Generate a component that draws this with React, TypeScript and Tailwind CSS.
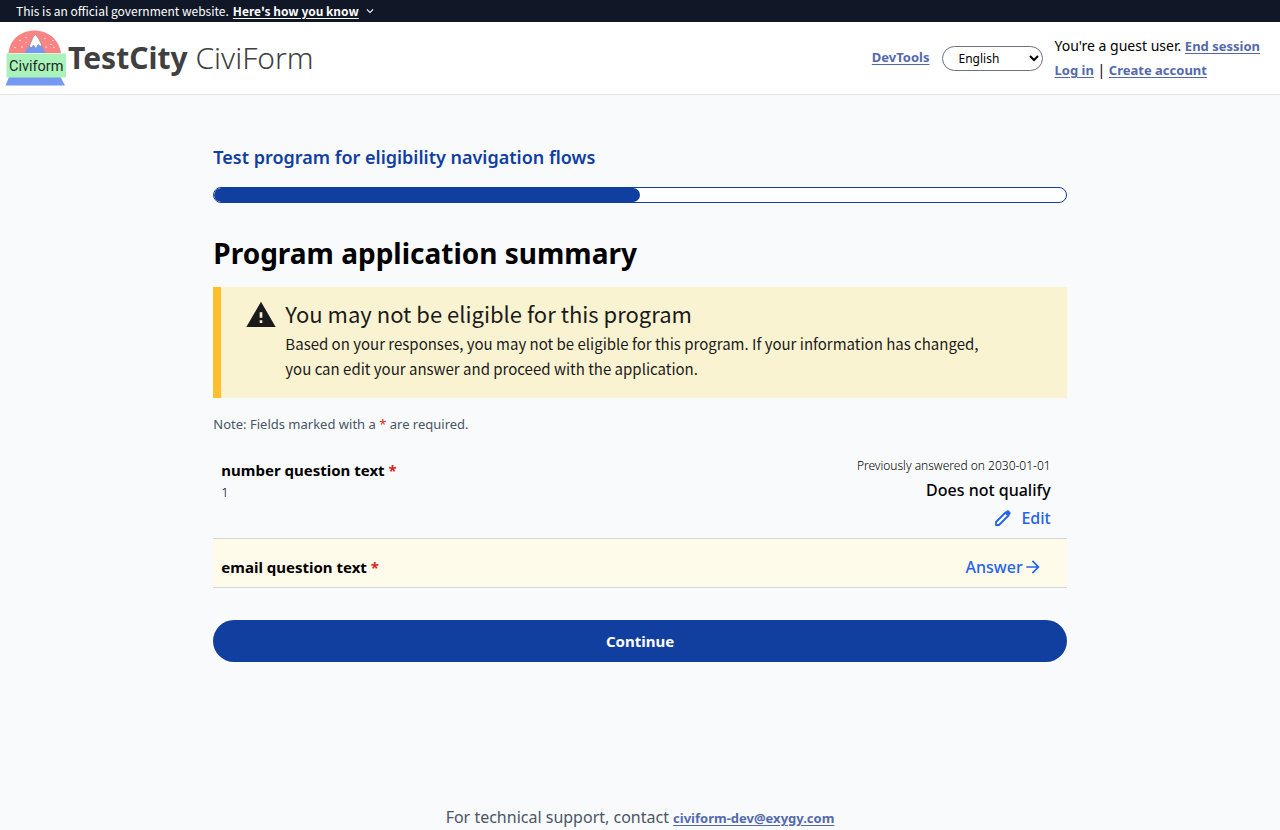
import type { ReactNode } from "react";
import { MdArrowForward, MdExpandMore, MdWarning } from "react-icons/md";

function TextLink({ children }: { children: ReactNode }) {
  return (
    <a href="#" className="text-[13px] font-bold text-[#5469ac] underline underline-offset-2">
      {children}
    </a>
  );
}

function Required() {
  return <span className="text-[#dc2626]">*</span>;
}

function PencilIcon() {
  return (
    <svg viewBox="0 0 16 16" className="size-4 shrink-0" aria-hidden="true">
      <path
        d="M1 15V12L10.500 2.500 13.500 5.500 4 15Z"
        fill="none"
        stroke="currentColor"
        strokeWidth="1.800"
        strokeLinejoin="round"
      />
      <path d="M9.500 3 12 .600Q12.900 0 13.700.600L15.400 2.300Q16 3.100 15.400 4L13 6.500Z" fill="currentColor" />
    </svg>
  );
}

function Logo() {
  return (
    <svg viewBox="0 0 64 60" className="mb-0.5 h-15 w-16 shrink-0" aria-label="CiviForm logo" role="img">
      <path d="M4.500 26C6 12 17 3.500 30.500 3.500S54.500 12 57 26Z" fill="#fa8383" />
      <path d="M20.500 26 28 14 31 7.500Q36 14 41.500 26Z" fill="#7599f1" />
      <path
        d="M25.500 18.500 29.500 9.500 31.500 7.500 34.500 11.500 37.500 17.500 36.500 19.500 34 17.500 32 21.500 29.500 18 27 21Z"
        fill="#fff"
        stroke="#8a8585"
        strokeWidth=".6"
      />
      <g fill="#ffe3e3">
        <circle cx="22" cy="10.500" r=".8" />
        <circle cx="16" cy="13.500" r=".8" />
        <circle cx="22" cy="15.500" r=".8" />
        <circle cx="11" cy="20.500" r=".8" />
        <circle cx="18" cy="20" r=".8" />
        <circle cx="41" cy="11.500" r=".8" />
        <circle cx="49" cy="13.500" r=".8" />
        <circle cx="42" cy="20" r=".8" />
        <circle cx="47" cy="17.500" r=".8" />
        <circle cx="50" cy="20.500" r=".8" />
      </g>
      <path d="M5 50H56.500L61 58.500H1.500Z" fill="#7599f1" />
      <path d="M2.500 26.500H62V50.500H2.500Z" fill="#a9f3bb" />
      <text x="5" y="44" fontSize="14.500" fontFamily="Roboto, sans-serif" fill="#1d2b22">
        Civiform
      </text>
    </svg>
  );
}

export default function App() {
  return (
    <div className="flex min-h-screen flex-col bg-[#f8fafc] font-['Noto_Sans',sans-serif] text-black">
      <section
        aria-label="Official government website"
        className="flex h-[22px] items-center bg-gray-900 px-4 font-['Noto_Sans_CJK_SC',sans-serif] text-xs text-white"
      >
        <span>This is an official government website.</span>
        <button type="button" className="ml-1 flex items-center gap-1 font-bold">
          <span className="underline underline-offset-2">Here's how you know</span>
          <MdExpandMore className="size-3.5" />
        </button>
      </section>

      <header className="flex h-[73px] items-center border-b border-gray-200 bg-white pr-5 pl-1">
        <Logo />
        <div className="text-3xl text-[#404040]">
          <span className="font-bold">TestCity</span> <span className="font-light">CiviForm</span>
        </div>
        <nav className="ml-auto flex items-center gap-3">
          <TextLink>DevTools</TextLink>
          <select
            aria-label="Language"
            defaultValue="en"
            className="h-[25px] w-[101px] rounded-full border border-gray-500 bg-white pl-3 text-xs"
          >
            <option value="en">English</option>
            <option value="es">Español</option>
          </select>
          <div className="text-sm leading-6">
            <div>
              You're a guest user. <TextLink>End session</TextLink>
            </div>
            <div>
              <TextLink>Log in</TextLink> | <TextLink>Create account</TextLink>
            </div>
          </div>
        </nav>
      </header>

      <main className="mx-auto w-2/3 pt-12">
        <h2 className="text-lg leading-7 font-semibold text-[#113f9f]">
          Test program for eligibility navigation flows
        </h2>
        <div
          role="progressbar"
          aria-label="Application progress"
          aria-valuenow={50}
          className="mt-4 h-4 overflow-hidden rounded-full border border-[#113f9f] bg-white"
        >
          <div className="h-full w-1/2 rounded-full bg-[#113f9f]" />
        </div>
        <h1 className="mt-8 text-[28px] leading-9 font-bold">Program application summary</h1>

        <section className="mt-4 flex min-h-[111px] border-l-8 border-[#ffbe2e] bg-[#faf3d1] pt-3 pr-16 pl-6 font-['Noto_Sans_CJK_SC',sans-serif] text-[#1b1b1b]">
          <MdWarning className="size-8 shrink-0" />
          <div className="ml-2">
            <h3 className="mb-1 text-[22px] leading-7">You may not be eligible for this program</h3>
            <p className="text-[15px] leading-[25px]">
              Based on your responses, you may not be eligible for this program. If your information has changed, you
              can edit your answer and proceed with the application.
            </p>
          </div>
        </section>

        <p className="mt-4 text-[13px] leading-5 text-gray-600">
          Note: Fields marked with a <Required /> are required.
        </p>

        <div className="mt-2">
          <div className="flex justify-between border-b border-gray-300 pt-4 pr-4 pb-2 pl-2">
            <div>
              <div className="text-[15px] leading-6 font-bold">
                number question text <Required />
              </div>
              <div className="text-[13px] leading-5 font-light">1</div>
            </div>
            <div className="flex flex-col items-end">
              <div className="text-xs leading-4 font-light">Previously answered on 2030-01-01</div>
              <div className="mt-1 text-base leading-6 font-medium">Does not qualify</div>
              <a href="#" className="mt-1 flex items-center gap-2.5 text-base leading-6 font-medium text-[#2563eb]">
                <PencilIcon />
                Edit
              </a>
            </div>
          </div>
          <div className="flex items-end justify-between border-b border-gray-300 bg-[#fffbeb] pt-4 pr-6 pb-2 pl-2">
            <div className="text-[15px] leading-6 font-bold">
              email question text <Required />
            </div>
            <a href="#" className="flex items-center text-base leading-6 font-medium text-[#2563eb]">
              Answer
              <MdArrowForward className="size-5" />
            </a>
          </div>
        </div>

        <button
          type="button"
          className="mt-8 h-[42px] w-full rounded-full bg-[#113f9f] text-[15px] font-bold text-white"
        >
          Continue
        </button>
      </main>

      <footer className="mt-auto text-center text-base leading-6 text-gray-600">
        For technical support, contact <TextLink>civiform-dev@exygy.com</TextLink>
      </footer>
    </div>
  );
}
